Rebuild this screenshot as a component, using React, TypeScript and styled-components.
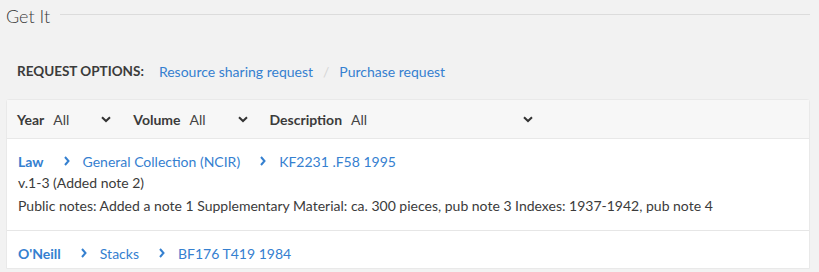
import React from "react";
import styled, { createGlobalStyle } from "styled-components";

const Global = createGlobalStyle`
  html, body { margin: 0; padding: 0; background: #f2f2f2; }
  body { font-family: Lato, "Open Sans", sans-serif; color: #3b3b3b; }
  * { box-sizing: border-box; }
`;

const Page = styled.div`
  width: 819px;
  height: 272px;
  overflow: hidden;
  padding: 0 9px 0 6px;
`;

const TitleRow = styled.div`
  display: flex;
  align-items: center;
  gap: 10px;
  height: 32px;
`;

const Title = styled.h2`
  margin: 0;
  font-size: 18px;
  font-weight: 300;
  color: #3a3a3a;
  line-height: 1;
`;

const Rule = styled.div`
  flex: 1;
  height: 1px;
  background: #dcdcdc;
  margin-top: -3px;
`;

const Options = styled.div`
  display: flex;
  align-items: center;
  height: 78px;
  padding: 0 0 0 11px;
  font-size: 14px;
`;

const OptLabel = styled.span`
  font-weight: 700;
  color: #3b3b3b;
  text-transform: uppercase;
  margin-right: 15px;
  font-size: 13.5px;
`;

const Link = styled.a<{ $bold?: boolean }>`
  color: #3580d0;
  text-decoration: none;
  font-weight: ${(p) => (p.$bold ? 700 : 400)};
  cursor: pointer;
`;

const Slash = styled.span`
  color: #d6d6d6;
  margin: 0 10px;
`;

const Panel = styled.div`
  background: #fff;
  border: 1px solid #e9e9e9;
  border-radius: 3px 3px 0 0;
  margin-top: -11px;
`;

const Filters = styled.div`
  display: flex;
  align-items: center;
  height: 39px;
  background: #f7f7f7;
  border-bottom: 1px solid #e8e8e8;
  padding: 0 0 0 10px;
  font-size: 14px;
`;

const Filter = styled.div`
  display: flex;
  align-items: center;
  margin-right: 20px;
`;

const FilterLabel = styled.span`
  font-weight: 700;
  color: #3b3b3b;
  margin-right: 9px;
`;

const Select = styled.div<{ $w: number }>`
  display: flex;
  align-items: center;
  justify-content: space-between;
  width: ${(p) => p.$w}px;
  padding-right: 2px;
  color: #444;
`;

const Chevron = () => (
  <svg width="10" height="7" viewBox="0 0 10 7">
    <path d="M1 1.2 L5 5 L9 1.2" fill="none" stroke="#333" strokeWidth="2" />
  </svg>
);

const Row = styled.div<{ $last?: boolean }>`
  padding: 12px 11px 0;
  border-bottom: ${(p) => (p.$last ? "none" : "1px solid #e6e6e6")};
  font-size: 14px;
  height: ${(p) => (p.$last ? "37px" : "92px")};
`;

const Crumbs = styled.div`
  display: flex;
  align-items: center;
  height: 20px;
`;

const Sep = styled.span`
  display: inline-flex;
  margin: 0 13px 0 20px;
`;

const Line = styled.div`
  line-height: 23px;
  color: #3b3b3b;
`;

const Arrow = () => (
  <svg width="6" height="10" viewBox="0 0 6 10">
    <path d="M1 1 L4.5 5 L1 9" fill="none" stroke="#3580d0" strokeWidth="2" />
  </svg>
);

const Crumbtrail = ({ items }: { items: string[] }) => (
  <Crumbs>
    {items.map((t, i) => (
      <React.Fragment key={t}>
        {i > 0 && (
          <Sep>
            <Arrow />
          </Sep>
        )}
        <Link $bold={i === 0}>{t}</Link>
      </React.Fragment>
    ))}
  </Crumbs>
);

export default function App() {
  return (
    <Page>
      <Global />
      <TitleRow>
        <Title>Get It</Title>
        <Rule />
      </TitleRow>
      <Options>
        <OptLabel>Request options:</OptLabel>
        <Link>Resource sharing request</Link>
        <Slash>/</Slash>
        <Link>Purchase request</Link>
      </Options>
      <Panel>
        <Filters>
          <Filter>
            <FilterLabel>Year</FilterLabel>
            <Select $w={60}>
              All <Chevron />
            </Select>
          </Filter>
          <Filter>
            <FilterLabel>Volume</FilterLabel>
            <Select $w={60}>
              All <Chevron />
            </Select>
          </Filter>
          <Filter>
            <FilterLabel>Description</FilterLabel>
            <Select $w={184}>
              All <Chevron />
            </Select>
          </Filter>
        </Filters>
        <Row>
          <Crumbtrail items={["Law", "General Collection (NCIR)", "KF2231 .F58 1995"]} />
          <Line>v.1-3 (Added note 2)</Line>
          <Line>
            Public notes: Added a note 1 Supplementary Material: ca. 300 pieces, pub note 3 Indexes:
            1937-1942, pub note 4
          </Line>
        </Row>
        <Row $last>
          <Crumbtrail items={["O'Neill", "Stacks", "BF176 T419 1984"]} />
        </Row>
      </Panel>
    </Page>
  );
}
